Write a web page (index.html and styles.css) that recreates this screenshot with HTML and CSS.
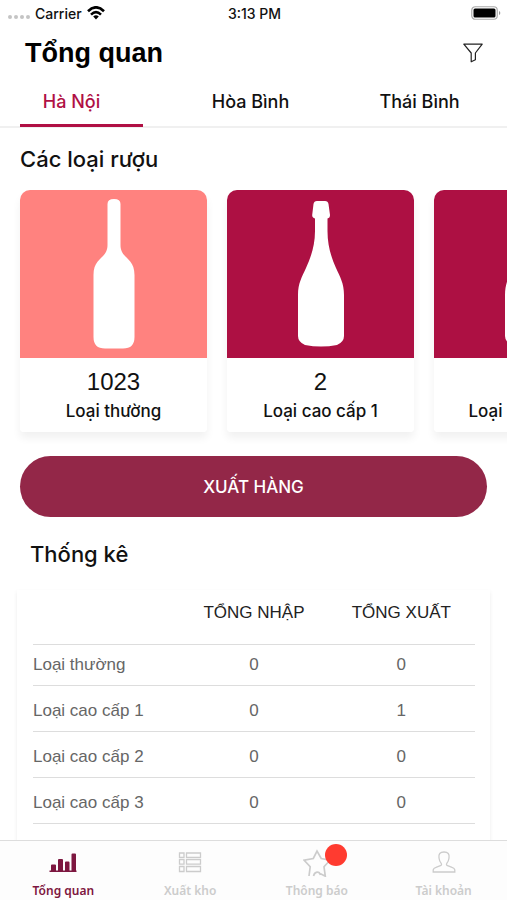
FILE: index.html
```html
<!DOCTYPE html>
<html lang="vi">
<head>
<meta charset="utf-8">
<meta name="viewport" content="width=device-width, initial-scale=1">
<title>Tổng quan</title>
<link rel="stylesheet" href="styles.css">
</head>
<body>
<div class="status">
  <div class="carrier">
    <span class="signal"><i></i><i></i><i></i><i></i></span>
    <span>Carrier</span>
    <svg width="18" height="14" viewBox="0 0 18 14" fill="none" stroke="#000" stroke-width="2.6"><path d="M1 5.2Q9-2.6 17 5.2"/><path d="M4 8.6Q9 3.8 14 8.6"/><path d="M6.2 10.6Q9 8 11.8 10.6L9 13.6Z" fill="#000" stroke="none"/></svg>
  </div>
  <span>3:13 PM</span>
  <svg class="battery" width="30" height="14" viewBox="0 0 30 14"><rect x=".75" y=".75" width="25.5" height="12.5" rx="3.5" fill="none" stroke="#aaa" stroke-width="1.2"/><rect x="2.5" y="2.5" width="22" height="9" rx="1.5"/><path d="M28 5v4q1.300-.6 1.300-2T28 5z" fill="#999"/></svg>
</div>
<header class="header">
  <h1>Tổng quan</h1>
  <button class="filter" type="button" aria-label="Lọc">
    <svg width="20" height="20" viewBox="0 0 20 20" fill="none" stroke="#222" stroke-width="1.200" stroke-linejoin="round"><path d="M.8 1.200h18.400L12.400 10v6.800L8.200 18.800V10Z"/></svg>
  </button>
</header>
<nav class="tabs">
  <a class="tab active" href="#ha-noi">Hà Nội</a>
  <a class="tab" href="#hoa-binh">Hòa Bình</a>
  <a class="tab" href="#thai-binh">Thái Bình</a>
</nav>
<main class="content">
  <h2>Các loại rượu</h2>
  <div class="cards">
    <article class="card">
      <div class="picture light"><svg width="42" height="150" viewBox="0 0 42 150" fill="#fff"><path d="M14.500 5Q14.500 0 21 0T27.500 5V46C27.500 60 41.500 58 41.500 76V138Q41.500 149.500 30 149.500H12Q.5 149.500 .5 138V76C.5 58 14.500 60 14.500 46Z"/></svg></div>
      <div class="info"><span class="count">1023</span><span class="kind">Loại thường</span></div>
    </article>
    <article class="card">
      <div class="picture"><svg width="46" height="146" viewBox="0 0 46 146" fill="#fff"><path d="M15.500 3Q16 0 19 0H27Q30 0 30.500 3L32 14Q32 17 29.500 17.500V30C29.500 46 34 58 38 67S46 82 46 94V135Q46 141 39 144Q23 147 7 144Q0 141 0 135V94C0 82 4 76 8 67S17 46 17 30V17.500Q14 17 14.200 14Z"/></svg></div>
      <div class="info"><span class="count">2</span><span class="kind">Loại cao cấp 1</span></div>
    </article>
    <article class="card">
      <div class="picture"><svg width="46" height="146" viewBox="0 0 46 146" fill="#fff"><path d="M15.500 3Q16 0 19 0H27Q30 0 30.500 3L32 14Q32 17 29.500 17.500V30C29.500 46 34 58 38 67S46 82 46 94V135Q46 141 39 144Q23 147 7 144Q0 141 0 135V94C0 82 4 76 8 67S17 46 17 30V17.500Q14 17 14.200 14Z"/></svg></div>
      <div class="info"><span class="count">0</span><span class="kind">Loại cao cấp 2</span></div>
    </article>
  </div>
  <button class="export" type="button">XUẤT HÀNG</button>
  <h2 class="stats-title">Thống kê</h2>
  <section class="panel">
    <table>
      <thead><tr><td></td><th scope="col">TỔNG NHẬP</th><th scope="col">TỔNG XUẤT</th></tr></thead>
      <tbody>
        <tr><th scope="row">Loại thường</th><td>0</td><td>0</td></tr>
        <tr><th scope="row">Loại cao cấp 1</th><td>0</td><td>1</td></tr>
        <tr><th scope="row">Loại cao cấp 2</th><td>0</td><td>0</td></tr>
        <tr><th scope="row">Loại cao cấp 3</th><td>0</td><td>0</td></tr>
      </tbody>
    </table>
  </section>
</main>
<nav class="bottom">
  <a class="item current" href="#tong-quan">
    <svg width="28" height="24" viewBox="0 0 28 24" fill="currentColor"><path d="M.5 20.500h27V22H.5zM2 15.500q0-1 1-1h3q1 0 1 1V21H2zM9 10q0-1 1-1h3q1 0 1 1v11H9zM16 12.500q0-1 1-1h2.500q1 0 1 1V21H16zM22.500 4.500q0-1 1-1h2.500q1 0 1 1V21h-4.500z"/></svg>
    <span>Tổng quan</span>
  </a>
  <a class="item" href="#xuat-kho">
    <svg width="24" height="24" viewBox="0 0 24 24" fill="none" stroke="currentColor" stroke-width="1.300"><path d="M1.500 3h4.500v4.500H1.500zM8.500 3h14v4.500h-14zM1.500 9.700h4.500v4.500H1.500zM8.500 9.700h14v4.500h-14zM1.500 16.500h4.500V21.500H1.500zM8.500 16.500h14V21.500h-14z"/></svg>
    <span>Xuất kho</span>
  </a>
  <a class="item" href="#thong-bao">
    <span class="icon"><svg width="28" height="28" viewBox="0 0 28 28" fill="none" stroke="currentColor" stroke-width="1.700"><path d="M6 27L7.200 17.800 1.200 11.200 10.300 9.500 14 2 18.200 9.500 27 11.200 21 17.800 22.300 27.200 17.500 24.800M10.500 27Q11.500 23.500 14 23.200T17.500 26"/></svg><i class="badge"></i></span>
    <span>Thông báo</span>
  </a>
  <a class="item" href="#tai-khoan">
    <svg width="24" height="24" viewBox="0 0 24 24" fill="none" stroke="currentColor" stroke-width="1.300"><path d="M1.200 22V19.800Q1.500 18.200 4 17.400L9 15.400Q10 14.700 9.200 13.300Q7.300 11 7 8Q6 2 12 2T17 8Q16.700 11 14.800 13.300Q14 14.700 15 15.400L20 17.400Q22.500 18.200 22.800 19.800V22Z"/></svg>
    <span>Tài khoản</span>
  </a>
</nav>
</body>
</html>
```
FILE: styles.css
```css
* { box-sizing: border-box; }

body {
  margin: 0;
  height: 100vh;
  display: flex;
  flex-direction: column;
  overflow: hidden;
  background: #fff;
  color: #111;
  font-family: Inter, "Liberation Sans", sans-serif;
  font-weight: 500;
}

a { color: inherit; text-decoration: none; }
svg { display: block; }
button { border: 0; font: inherit; cursor: pointer; }

.status {
  display: grid;
  grid-template-columns: 1fr auto 1fr;
  align-items: center;
  height: 26px;
  padding: 0 6px 0 8px;
  font-size: 14px;
}
.carrier { display: flex; align-items: center; gap: 5px; }
.signal { display: flex; gap: 2px; padding-top: 8px; }
.signal i { width: 4px; height: 4px; border-radius: 50%; background: #c4c4c4; }
.battery { justify-self: end; }

.header {
  display: flex;
  align-items: center;
  justify-content: space-between;
  height: 54px;
  padding: 0 24px 0 25px;
}
h1 {
  margin: 0;
  font: bold 27px/32px "Liberation Sans", sans-serif;
  color: #000;
}
.filter { padding: 0; background: none; }

.tabs {
  display: grid;
  grid-template-columns: repeat(3, minmax(0, 1fr));
  gap: 46px;
  height: 48px;
  padding: 0 26px 0 20px;
  border-bottom: 2px solid #f0f0f0;
  flex: none;
}
.tab {
  height: 47px;
  line-height: 43px;
  text-align: center;
  font-size: 18px;
  white-space: nowrap;
}
.active {
  padding-right: 20px;
  color: #b01044;
  border-bottom: 3px solid #b01044;
}

.content { flex: 1; min-height: 0; overflow: hidden; }
h2 {
  margin: 0;
  padding: 18px 20px;
  font-size: 22px;
  line-height: 26px;
  font-weight: 500;
}

.cards {
  display: flex;
  gap: 20px;
  padding: 0 20px 24px;
  overflow: hidden;
}
.card {
  flex: 0 0 187px;
  border-radius: 10px 10px 4px 4px;
  box-shadow: 0 6px 9px rgba(0, 0, 0, .06);
  overflow: hidden;
}
.picture {
  display: grid;
  place-items: center;
  height: 168px;
  background: #ad1043;
}
.light { background: #ff827f; }
.info {
  display: flex;
  flex-direction: column;
  align-items: center;
  height: 74px;
  padding-top: 9px;
  background: #fff;
}
.count { font: 24px/30px "Liberation Sans", sans-serif; }
.kind { font-size: 17px; line-height: 28px; white-space: nowrap; }

.export {
  display: block;
  width: calc(100% - 40px);
  height: 61px;
  margin: 0 20px;
  border-radius: 31px;
  background: #932748;
  color: #fff;
  font-size: 17px;
}

.stats-title { padding: 24px 30px 23px; }
.panel {
  margin: 0 17px;
  padding: 0 15px 30px 16px;
  box-shadow: 0 2px 4px rgba(0, 0, 0, .08);
}
table {
  width: 100%;
  table-layout: fixed;
  border-collapse: separate;
  border-spacing: 0;
  font: 17px/20px "Liberation Sans", sans-serif;
}
tr { height: 46px; }
td, th {
  padding: 5px 0 0;
  border-bottom: 1px solid #ddd;
  color: #666;
  font-weight: 400;
  text-align: center;
}
th[scope="row"] { text-align: left; }
thead tr { height: 55px; }
thead th { padding: 0 0 9px; color: #222; }
tbody tr:first-child { height: 41px; }
tbody tr:first-child > * { padding: 0; }

.bottom {
  display: grid;
  grid-template-columns: repeat(4, 1fr);
  height: 60px;
  flex: none;
  border-top: 1px solid #ddd;
  background: #fdfdfd;
  font: 600 12px/16px "Noto Sans", sans-serif;
}
.item {
  display: flex;
  flex-direction: column;
  align-items: center;
  justify-content: flex-end;
  gap: 8px;
  padding-bottom: 1px;
  color: #ccc;
}
.item svg { margin-bottom: 1px; }
.current { color: #7d1740; }
.icon { position: relative; height: 26px; }
.badge {
  position: absolute;
  top: -5px;
  left: 22px;
  width: 22px;
  height: 22px;
  border-radius: 50%;
  background: #ff3b30;
}
```
